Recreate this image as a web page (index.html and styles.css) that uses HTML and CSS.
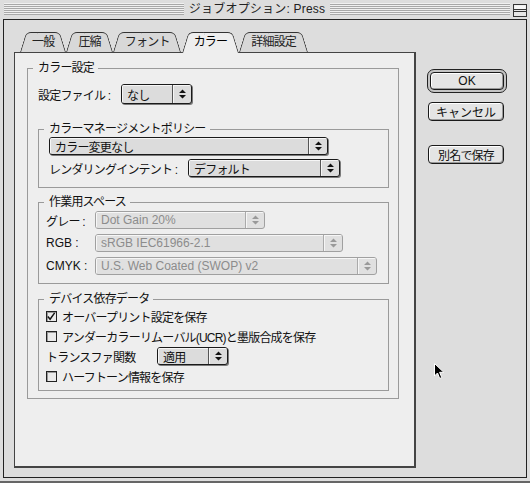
FILE: index.html
```html
<!DOCTYPE html>
<html lang="ja">
<head>
<meta charset="utf-8">
<title>ジョブオプション: Press</title>
<link rel="stylesheet" href="styles.css">
</head>
<body>
<div class="window">
  <div class="titlebar">
    <div class="stripes"></div>
    <div class="title">ジョブオプション: Press</div>
    <div class="stripes"></div>
    <svg class="collapse" width="14" height="13" viewBox="0 0 14 13">
      <rect x="0.5" y="0.5" width="13" height="12" fill="#e6e6e6" stroke="#333"/>
      <rect x="1.5" y="1.5" width="11" height="4" fill="#f6f6f6"/>
      <line x1="1" y1="5.5" x2="13" y2="5.5" stroke="#333"/>
      <line x1="1" y1="7.5" x2="13" y2="7.5" stroke="#333"/>
    </svg>
  </div>
  <div class="content">
    <div class="left">
      <div class="tabs">
        <div class="tab">一般</div>
        <div class="tab">圧縮</div>
        <div class="tab">フォント</div>
        <div class="tab sel">カラー</div>
        <div class="tab">詳細設定</div>
      </div>
      <div class="panel">
        <fieldset class="grp outer">
          <legend>カラー設定</legend>
          <div class="row r20">
            <span class="lbl lbl-file">設定ファイル : </span>
            <div class="popup tall w-file"><span class="pt">なし</span><span class="pa"><svg width="7" height="10" viewBox="0 0 7 10"><path d="M0 4 L3.5 0.5 L7 4 Z M0 6 L3.5 9.5 L7 6 Z" fill="currentColor"/></svg></span></div>
          </div>

          <fieldset class="grp sub sub1">
            <legend>カラーマネージメントポリシー</legend>
            <div class="stack g4 indent">
              <div class="popup w-policy"><span class="pt">カラー変更なし</span><span class="pa"><svg width="7" height="10" viewBox="0 0 7 10"><path d="M0 4 L3.5 0.5 L7 4 Z M0 6 L3.5 9.5 L7 6 Z" fill="currentColor"/></svg></span></div>
              <div class="row r18">
                <span class="lbl lbl-render">レンダリングインテント : </span>
                <div class="popup w-render"><span class="pt">デフォルト</span><span class="pa"><svg width="7" height="10" viewBox="0 0 7 10"><path d="M0 4 L3.5 0.5 L7 4 Z M0 6 L3.5 9.5 L7 6 Z" fill="currentColor"/></svg></span></div>
              </div>
            </div>
          </fieldset>

          <fieldset class="grp sub sub2">
            <legend>作業用スペース</legend>
            <div class="stack g5">
              <div class="row r18">
                <span class="lbl lbl-ws">グレー : </span>
                <div class="popup dis w-gray"><span class="pt latin">Dot Gain 20%</span><span class="pa"><svg width="7" height="10" viewBox="0 0 7 10"><path d="M0 4 L3.5 0.5 L7 4 Z M0 6 L3.5 9.5 L7 6 Z" fill="currentColor"/></svg></span></div>
              </div>
              <div class="row r18">
                <span class="lbl lbl-ws latin">RGB :</span>
                <div class="popup dis w-rgb"><span class="pt latin">sRGB IEC61966-2.1</span><span class="pa"><svg width="7" height="10" viewBox="0 0 7 10"><path d="M0 4 L3.5 0.5 L7 4 Z M0 6 L3.5 9.5 L7 6 Z" fill="currentColor"/></svg></span></div>
              </div>
              <div class="row r18">
                <span class="lbl lbl-ws latin">CMYK :</span>
                <div class="popup dis w-cmyk"><span class="pt latin">U.S. Web Coated (SWOP) v2</span><span class="pa"><svg width="7" height="10" viewBox="0 0 7 10"><path d="M0 4 L3.5 0.5 L7 4 Z M0 6 L3.5 9.5 L7 6 Z" fill="currentColor"/></svg></span></div>
              </div>
            </div>
          </fieldset>

          <fieldset class="grp sub sub3">
            <legend>デバイス依存データ</legend>
            <div class="stack g2">
              <div class="row r18">
                <span class="cb"><svg width="11" height="11" viewBox="0 0 11 11"><path d="M2 5.5 L4.5 8.5 L9.5 1.5" fill="none" stroke="#111" stroke-width="1.6"/></svg></span>
                <span>オーバープリント設定を保存</span>
              </div>
              <div class="row r18">
                <span class="cb"></span>
                <span>アンダーカラーリムーバル(UCR)と墨版合成を保存</span>
              </div>
              <div class="row r18">
                <span class="lbl lbl-tr">トランスファ関数</span>
                <div class="popup w-file"><span class="pt">適用</span><span class="pa"><svg width="7" height="10" viewBox="0 0 7 10"><path d="M0 4 L3.5 0.5 L7 4 Z M0 6 L3.5 9.5 L7 6 Z" fill="currentColor"/></svg></span></div>
              </div>
              <div class="row r18">
                <span class="cb"></span>
                <span>ハーフトーン情報を保存</span>
              </div>
            </div>
          </fieldset>
        </fieldset>
      </div>
    </div>
    <div class="buttons">
      <div class="defring"><div class="btn latin">OK</div></div>
      <div class="btn bw m9 wide">キャンセル</div>
      <div class="btn bw m24">別名で保存</div>
    </div>
  </div>
  <svg class="cursor" width="11" height="17" viewBox="0 0 11 17">
    <path d="M0.5 0.5 L0.5 13 L3.5 10 L5.7 15.5 L7.8 14.6 L5.6 9.3 L9.8 9.3 Z" fill="#000" stroke="#fff" stroke-width="1"/>
  </svg>
</div>
</body>
</html>
```

FILE: styles.css
```css
* { box-sizing: border-box; }
html, body { margin: 0; padding: 0; }
body {
  width: 530px;
  height: 483px;
  overflow: hidden;
  background: #dddddd;
  font-family: "Liberation Sans", "Noto Sans CJK JP", sans-serif;
  font-size: 12px;
  color: #111;
  letter-spacing: -0.8px;
}
.latin { letter-spacing: 0; }

.window {
  position: relative;
  width: 530px;
  height: 483px;
  padding: 0 3px 3px 3px;
  border-bottom: 2px solid #666;
  background: #dddddd;
}

.titlebar {
  display: flex;
  align-items: flex-start;
  height: 19px;
  padding: 3px 0 0 1px;
}
.stripes {
  flex: 1;
  height: 12px;
  background: repeating-linear-gradient(to bottom, #f0f0f0 0 1px, #a8a8a8 1px 2px);
}
.title {
  padding: 0 5px;
  line-height: 12px;
  color: #222;
  white-space: nowrap;
  letter-spacing: 0.2px;
}
.collapse { margin: 1px 0 0 3px; }

.content {
  display: flex;
  height: 459px;
  border: 1px solid #222;
  padding: 12px 0 0 10px;
}
.left {
  width: 402px;
  display: flex;
  flex-direction: column;
}

.tabs {
  display: flex;
  height: 20px;
  padding-left: 6px;
  position: relative;
  z-index: 1;
}
.tab {
  position: relative;
  z-index: 0;
  height: 20px;
  padding: 0 12px;
  line-height: 20px;
  color: #222;
  white-space: nowrap;
}
.tab::before, .tab::after {
  content: "";
  position: absolute;
  top: 0;
  bottom: 0;
  z-index: -1;
  background: #d8d8d8;
  border-top: 1px solid #333;
  transform-origin: bottom;
}
.tab::before {
  left: 0;
  right: 50%;
  border-left: 1px solid #333;
  border-top-left-radius: 5px;
  transform: skewX(-17deg);
}
.tab::after {
  left: 50%;
  right: 0;
  border-right: 1px solid #333;
  border-top-right-radius: 5px;
  transform: skewX(17deg);
}
.tab.sel { color: #000; }
.tab.sel::before, .tab.sel::after {
  background: #eeeeee;
  bottom: -1px;
}

.panel {
  height: 416px;
  background: #eeeeee;
  border: 1px solid #444;
  border-right-width: 2px;
  border-bottom-width: 2px;
  padding: 8px 0 0 12px;
}

.grp {
  margin: 0;
  border: 1px solid #9a9a9a;
  min-width: 0;
}
.grp > legend {
  padding: 0 4px 0 5px;
  line-height: 14px;
  height: 14px;
  color: #111;
}
.outer {
  width: 372px;
  padding: 9px 9px 7px 10px;
}
.outer > legend { margin-left: -5px; }
.sub {
  width: 351px;
  padding-left: 7px;
  padding-right: 0;
}
.sub > legend { margin-left: -2px; }
.sub1 { margin-top: 18px; padding-top: 1px; padding-bottom: 10px; }
.sub2 { margin-top: 7px; padding-top: 2px; padding-bottom: 8px; }
.sub3 { margin-top: 8px; padding-top: 1px; padding-bottom: 5px; }

.stack { display: flex; flex-direction: column; align-items: flex-start; }
.g2 { gap: 2px; }
.g4 { gap: 4px; }
.g5 { gap: 5px; }
.indent { margin-left: 3px; }

.row { display: flex; align-items: center; white-space: nowrap; }
.r18 { height: 18px; }
.r20 { height: 20px; }

.lbl { white-space: pre; flex: none; }
.lbl-file { width: 83px; }
.lbl-render { width: 139px; }
.lbl-ws { width: 49px; }
.lbl-tr { width: 111px; }

.popup {
  display: flex;
  height: 18px;
  border: 1px solid #1a1a1a;
  border-radius: 3px;
  background: #dcdcdc;
  box-shadow: 1px 1px 0 #7a7a7a;
  overflow: hidden;
  flex: none;
}
.popup.tall { height: 20px; }
.pt {
  flex: 1;
  padding-left: 5px;
  display: flex;
  align-items: center;
  white-space: nowrap;
  box-shadow: inset 1px 1px 0 #f6f6f6;
}
.pa {
  width: 19px;
  border-left: 1px solid #555;
  display: flex;
  align-items: center;
  justify-content: center;
  color: #111;
  box-shadow: inset 1px 1px 0 #f6f6f6;
}
.popup.dis {
  border-color: #a0a0a0;
  box-shadow: none;
  color: #8c8c8c;
  background: #e0e0e0;
}
.popup.dis .pa { border-left-color: #aaa; color: #999; }

.w-file { width: 71px; }
.w-policy { width: 279px; }
.w-render { width: 152px; }
.w-gray { width: 170px; }
.w-rgb { width: 248px; }
.w-cmyk { width: 282px; }

.cb {
  width: 11px;
  height: 11px;
  margin-right: 5px;
  border: 1px solid #222;
  background: #eaeaea;
  box-shadow: inset 1px 1px 0 #9a9a9a;
  display: flex;
  flex: none;
  overflow: visible;
}
.cb svg { margin: -1px 0 0 -1px; }

.buttons {
  margin-left: 11px;
  padding-top: 37px;
  display: flex;
  flex-direction: column;
  align-items: flex-start;
}
.defring {
  width: 80px;
  height: 24px;
  border: 1px solid #222;
  border-radius: 7px;
  padding: 2px;
  background: #c4c4c4;
}
.btn {
  display: flex;
  align-items: center;
  justify-content: center;
  border: 1px solid #1a1a1a;
  border-radius: 4px;
  background: #e4e4e4;
  box-shadow: inset 1px 1px 0 #fff, inset -1px -1px 0 #9a9a9a;
  white-space: nowrap;
}
.defring .btn { width: 100%; height: 100%; }
.bw { width: 76px; height: 19px; margin-left: 1px; }
.wide { letter-spacing: 0; }
.m9 { margin-top: 9px; }
.m24 { margin-top: 24px; }

.cursor {
  position: absolute;
  left: 434px;
  top: 363px;
}
```
